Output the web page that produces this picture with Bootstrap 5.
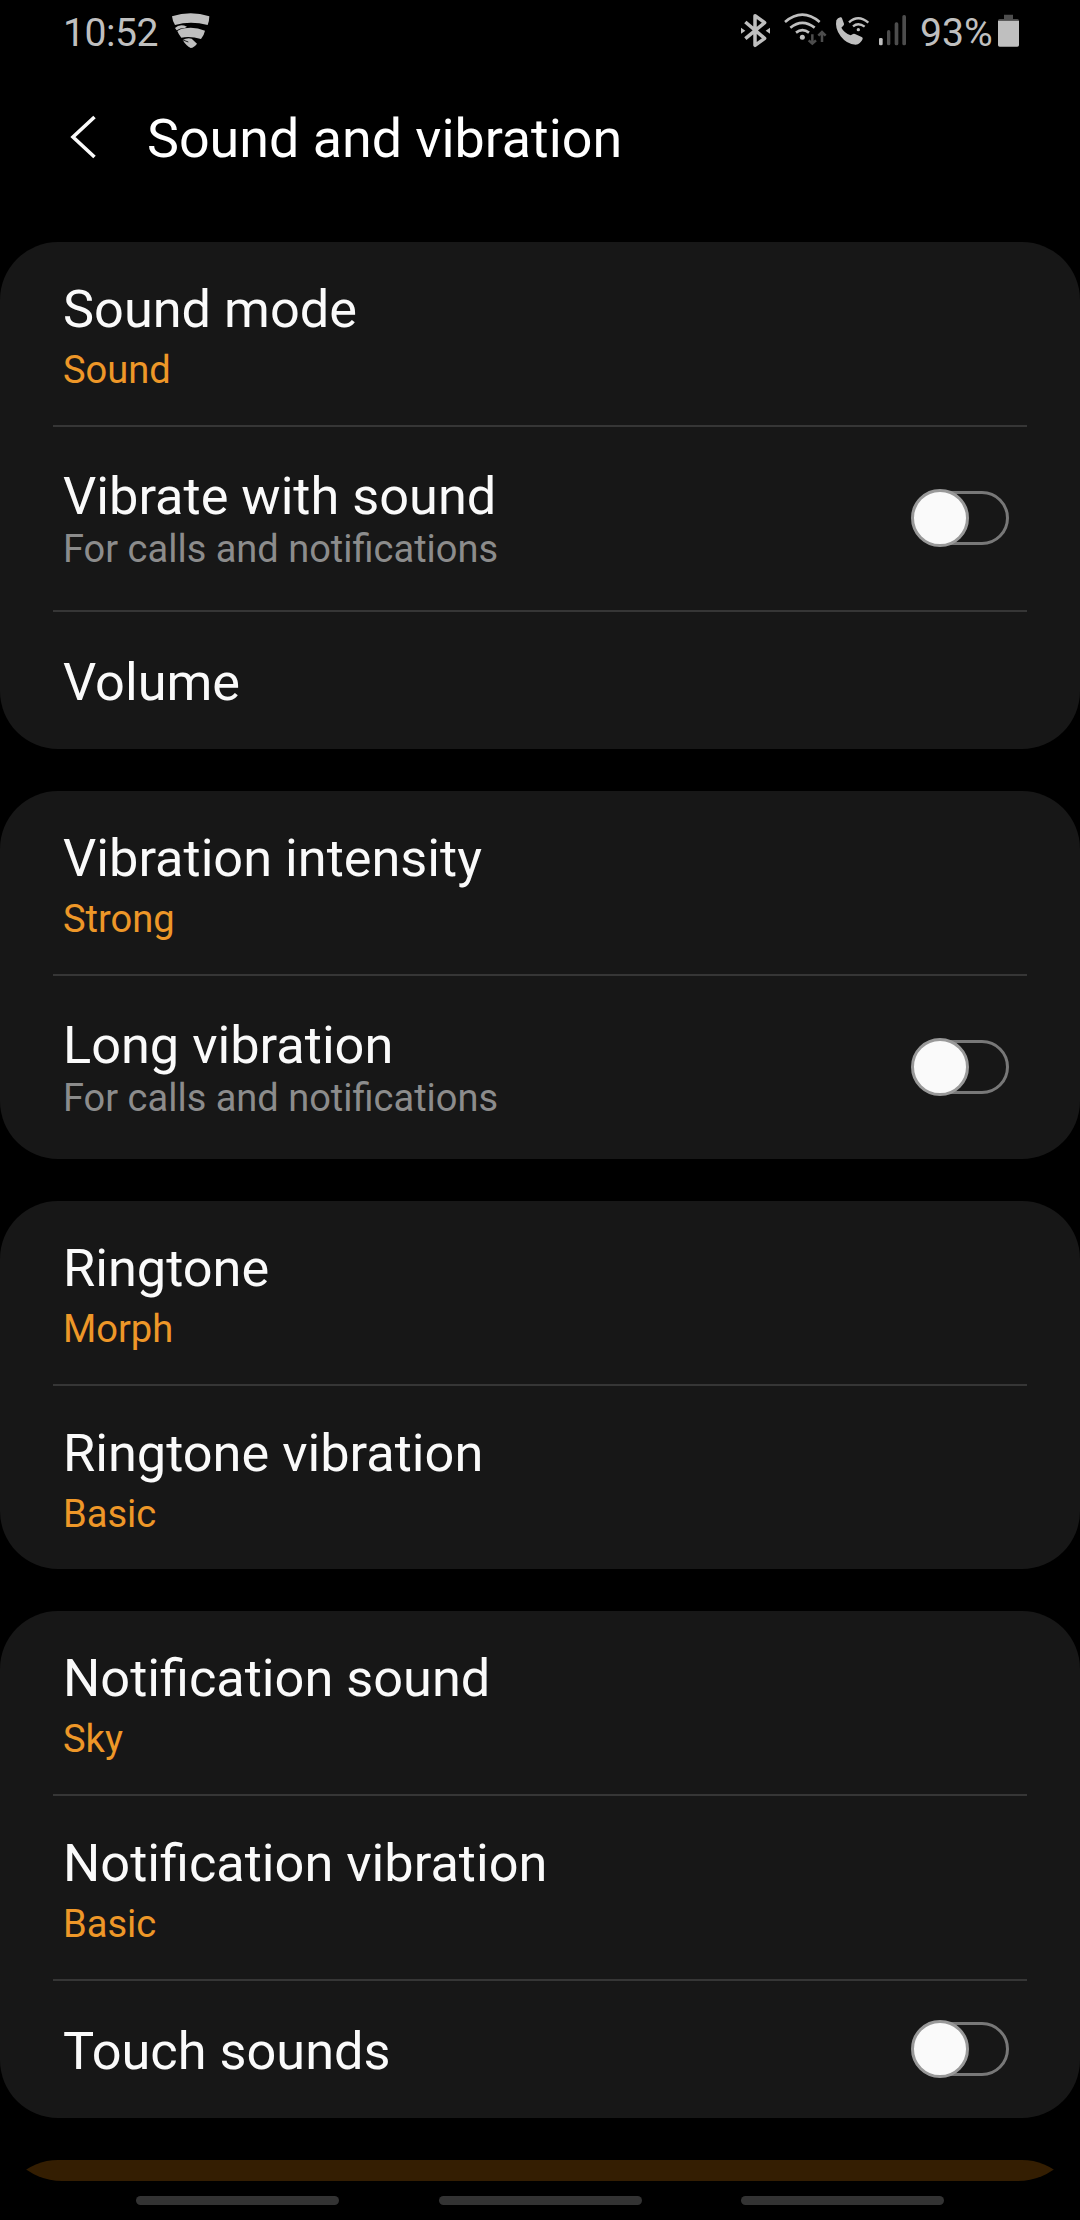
<!DOCTYPE html>
<html lang="en" data-bs-theme="dark">
<head>
<meta charset="utf-8">
<meta name="viewport" content="width=device-width, initial-scale=1">
<title>Sound and vibration</title>
<link href="https://cdn.jsdelivr.net/npm/bootstrap@5.3.0/dist/css/bootstrap.min.css" rel="stylesheet">
<style>
  body { font-family: Roboto, "Noto Sans", sans-serif; background: #000; color: #fafafa; }
  .screen { width: 1080px; height: 2220px; }
  .statusbar { height: 64px; padding: 0 59px 0 63px; color: #bfbfbf; font-size: 39.2px; line-height: 66px; }
  .statusbar svg { display: block; flex: none; }
  .statusbar .clock { width: 107px; white-space: nowrap; letter-spacing: -0.5px; }
  .battery-label { width: 77px; margin-left: -1px; white-space: nowrap; }
  .appbar { height: 178px; padding: 40px 0 0 70px; }
  .appbar h1 { font-size: 53.8px; line-height: 69px; font-weight: 400; margin: 0 0 0 49px; }
  .back-btn { width: 28px; height: 60px; }
  .viewport-area { height: 2117px; border-radius: 0 0 62px 62px; }
  .panels { gap: 42px; }
  .panel { background: #171717; border: 0; border-radius: 58px; color: #fafafa; flex: none; }
  .tip-panel { background: #341e02; border: 0; border-radius: 58px; height: 240px; flex: none; }
  .setting { height: 183px; padding: 36px 71px 0 63px; }
  .setting.with-note { padding-top: 38px; }
  .setting.single { height: 137px; padding-top: 39px; }
  .setting .name { font-size: 52.3px; line-height: 62px; }
  .setting .value { font-size: 38.1px; line-height: 45px; color: #ee9728; margin-top: 8px; }
  .setting .note { font-size: 38px; line-height: 45px; color: #8c8c8c; }
  .rule { height: 2px; background: #363636; margin: 0 53px; opacity: 1; }
  .toggle { width: 98px; height: 58px; margin-top: 24px; }
  .single .toggle { margin-top: 0; }
  .navbars { height: 39px; padding: 15px 136px 0; }
  .navbars span { width: 203px; height: 9px; border-radius: 5px; background: #333; }
</style>
</head>
<body>
<svg width="0" height="0" class="position-absolute">
  <symbol id="switch-off" viewBox="0 0 98 58">
    <rect x="3.5" y="3.5" width="93" height="51" rx="25.5" fill="none" stroke="#787878" stroke-width="3"/>
    <circle cx="29" cy="29" r="27.5" fill="#fafafa" stroke="#999" stroke-width="3"/>
  </symbol>
</svg>
<div class="screen d-flex flex-column overflow-hidden">
  <header class="statusbar d-flex justify-content-between flex-shrink-0">
    <div class="d-flex">
      <span class="clock">10:52</span>
      <svg width="41" height="50" viewBox="390 0 123 150" fill="#bfbfbf">
        <path d="M396 49Q452 30 508 49Q508 62 503 75Q452 62 405 75Q398 66 396 49Z"/>
        <path d="M405 84Q419 70 441 80L434 84Q421 84 410 91Z"/>
        <path d="M412 93Q420 87 434 85Q465 80 495 92Q492 106 483 117Q452 108 424 113Q416 104 412 93Z"/>
        <path d="M428 120Q440 113 455 116L471 131Q462 143 452 144Q439 138 428 120Z"/>
        <path d="M429 120L445 126" stroke="#000" stroke-width="2.5"/>
      </svg>
    </div>
    <div class="d-flex">
      <svg width="181" height="50" viewBox="60 0 543 150">
        <g fill="none" stroke="#bfbfbf">
          <path d="M76 66L134 115L105 136V47L134 68L76 116" stroke-width="10.5" stroke-linejoin="round"/>
          <path d="M195 66Q247 22 299 66" stroke-width="8"/>
          <path d="M211 83Q247 54 284 83" stroke-width="8"/>
          <path d="M228 98Q247 83 267 98" stroke-width="8"/>
          <path d="M387 67Q415 42 445 68" stroke-width="7"/>
          <path d="M399 79Q415 66 434 80" stroke-width="7"/>
        </g>
        <g fill="#bfbfbf">
          <path d="M63 83L76 92L63 101ZM150 83L137 92L150 101Z"/>
          <circle cx="247" cy="112" r="7.5"/>
          <circle cx="415" cy="89" r="5"/>
          <path d="M349 61Q353 53 361 52Q365 51 366 55L372 71Q373 75 369 78L364 83Q372 98 392 106L399 102Q402 100 405 102L425 111Q429 113 428 117Q421 133 407 134Q380 133 362 109Q344 86 349 61Z"/>
          <rect x="477" y="114" width="11" height="22" rx="4"/>
        </g>
        <g fill="#4d4d4d">
          <rect x="501" y="90" width="10" height="46" rx="5"/>
          <rect x="524" y="67" width="11" height="69" rx="5"/>
          <rect x="547" y="45" width="11" height="91" rx="5"/>
        </g>
        <path d="M277 103V129M266 121L277 131L288 121M306 126V98M295 107L306 96L317 107" fill="none" stroke="#4d4d4d" stroke-width="7.5"/>
      </svg>
      <span class="battery-label">93%</span>
      <svg width="24" height="50" viewBox="831 0 72 150">
        <path d="M852 44H879V57H892Q897 57 897 62H834Q834 57 839 57H852Z" fill="#4d4d4d"/>
        <path d="M834 62H897V135Q897 140 892 140H839Q834 140 834 135Z" fill="#bfbfbf"/>
      </svg>
    </div>
  </header>

  <main class="viewport-area d-flex flex-column flex-shrink-0 overflow-hidden">
    <div class="appbar d-flex align-items-start flex-shrink-0">
      <svg class="back-btn" viewBox="0 0 28 60" fill="none" stroke="#fafafa" stroke-width="3.6"><path d="M24.5 13L3 33L24.5 53"/></svg>
      <h1>Sound and vibration</h1>
    </div>
    <div class="panels d-flex flex-column">
      <section class="card panel">
        <div class="setting"><div class="name">Sound mode</div><div class="value">Sound</div></div>
        <div class="rule"></div>
        <div class="setting with-note d-flex justify-content-between">
          <div><div class="name">Vibrate with sound</div><div class="note">For calls and notifications</div></div>
          <svg class="toggle"><use href="#switch-off"/></svg>
        </div>
        <div class="rule"></div>
        <div class="setting single"><div class="name">Volume</div></div>
      </section>
      <section class="card panel">
        <div class="setting"><div class="name">Vibration intensity</div><div class="value">Strong</div></div>
        <div class="rule"></div>
        <div class="setting with-note d-flex justify-content-between">
          <div><div class="name">Long vibration</div><div class="note">For calls and notifications</div></div>
          <svg class="toggle"><use href="#switch-off"/></svg>
        </div>
      </section>
      <section class="card panel">
        <div class="setting"><div class="name">Ringtone</div><div class="value">Morph</div></div>
        <div class="rule"></div>
        <div class="setting"><div class="name">Ringtone vibration</div><div class="value">Basic</div></div>
      </section>
      <section class="card panel">
        <div class="setting"><div class="name">Notification sound</div><div class="value">Sky</div></div>
        <div class="rule"></div>
        <div class="setting"><div class="name">Notification vibration</div><div class="value">Basic</div></div>
        <div class="rule"></div>
        <div class="setting single d-flex justify-content-between"><div class="name">Touch sounds</div><svg class="toggle"><use href="#switch-off"/></svg></div>
      </section>
      <section class="card tip-panel"></section>
    </div>
  </main>

  <nav class="navbars d-flex justify-content-between"><span></span><span></span><span></span></nav>
</div>
<script src="https://cdn.jsdelivr.net/npm/bootstrap@5.3.0/dist/js/bootstrap.bundle.min.js"></script>
</body>
</html>
